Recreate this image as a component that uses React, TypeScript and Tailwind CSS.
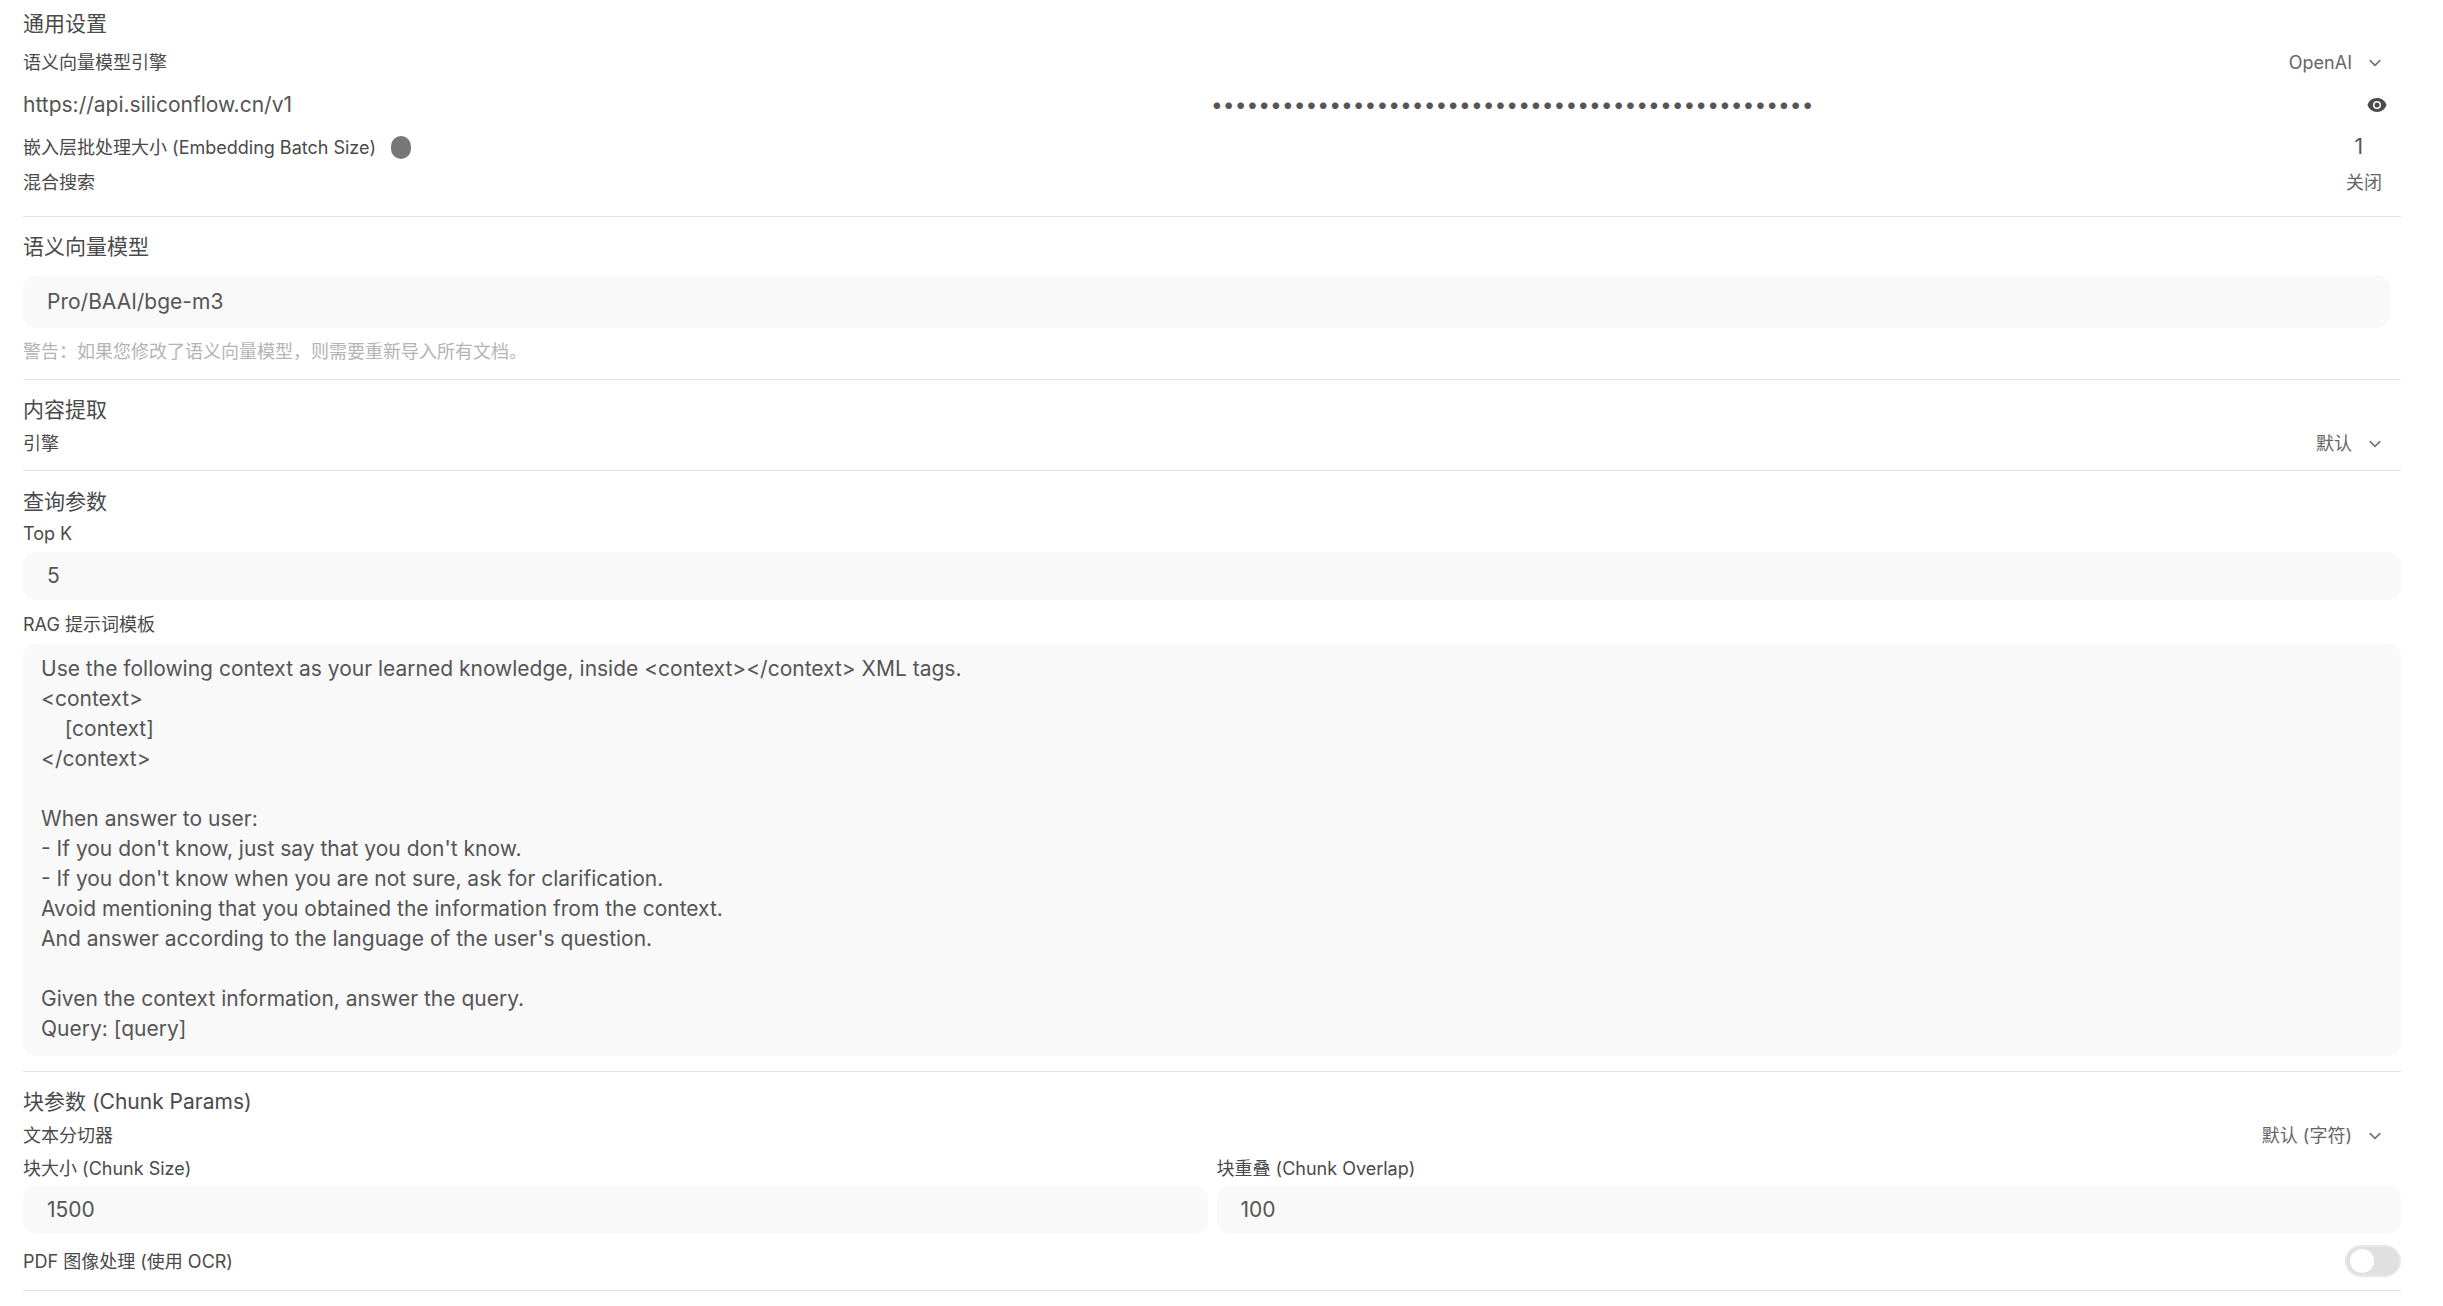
const font = { fontFamily: "Inter, 'Noto Sans CJK SC', sans-serif" };

function Chevron() {
  return (
    <svg className="w-[16px] h-[16px] text-[#6b7280] shrink-0" viewBox="0 0 20 20" fill="none" stroke="currentColor" strokeWidth="2" strokeLinecap="round" strokeLinejoin="round">
      <path d="M4 7l6 6 6-6" />
    </svg>
  );
}

function Heading({ children }: { children: React.ReactNode }) {
  return <div className="text-[21px] leading-[27px] text-[#4a4a4a]">{children}</div>;
}

function Row({ label, right, className = "" }: { label: React.ReactNode; right?: React.ReactNode; className?: string }) {
  return (
    <div className={`flex items-center justify-between text-[18px] leading-[22.5px] text-[#4a4a4a] ${className}`}>
      <div>{label}</div>
      {right}
    </div>
  );
}

function Sel({ text }: { text: string }) {
  return (
    <div className="flex items-center gap-[15px] pr-[18px] text-[#666]">
      <span>{text}</span>
      <Chevron />
    </div>
  );
}

function Field({ value, className = "" }: { value: string; className?: string }) {
  return (
    <div className={`h-[48px] flex items-center rounded-[13px] bg-[#f9f9f9] px-[24px] text-[21px] text-[#555] ${className}`}>
      {value}
    </div>
  );
}

function Divider({ className = "" }: { className?: string }) {
  return <div className={`h-px bg-[#e5e5e5] ${className}`} />;
}

const template = `Use the following context as your learned knowledge, inside <context></context> XML tags.
<context>
    [context]
</context>

When answer to user:
- If you don't know, just say that you don't know.
- If you don't know when you are not sure, ask for clarification.
Avoid mentioning that you obtained the information from the context.
And answer according to the language of the user's question.

Given the context information, answer the query.
Query: [query]`;

export default function App() {
  return (
    <div style={font} className="h-[1306px] w-[2443px] overflow-hidden bg-white pl-[23px] pr-[42px] pt-[10px]">
      <Heading>通用设置</Heading>
      <Row className="mt-[15px]" label="语义向量模型引擎" right={<Sel text="OpenAI" />} />
      <div className="mt-[17px] flex h-[27px] items-center gap-[9px] text-[21px] text-[#555]">
        <div className="flex-1">https://api.siliconflow.cn/v1</div>
        <div className="flex flex-1 items-center justify-between pl-[3px] pr-[14px]">
          <input type="password" readOnly value={"x".repeat(51)} className="w-[800px] bg-transparent text-[21px] text-[#555] outline-none" />
          <svg className="h-5 w-5 text-[#4a4a4a]" viewBox="0 0 20 20" fill="currentColor">
            <path d="M10 12.5a2.5 2.5 0 1 0 0-5 2.5 2.5 0 0 0 0 5Z" />
            <path fillRule="evenodd" clipRule="evenodd" d="M.664 10.59a1.651 1.651 0 0 1 0-1.186A10.004 10.004 0 0 1 10 3c4.257 0 7.893 2.66 9.336 6.41.147.381.146.804 0 1.186A10.004 10.004 0 0 1 10 17c-4.257 0-7.893-2.66-9.336-6.41ZM14 10a4 4 0 1 1-8 0 4 4 0 0 1 8 0Z" />
          </svg>
        </div>
      </div>
      <div className="mt-[15px] flex h-[27px] items-center justify-between text-[18px] text-[#4a4a4a]">
        <div className="flex items-center gap-[15px]">
          <span>嵌入层批处理大小 (Embedding Batch Size)</span>
          <span className="h-[23px] w-5 rounded-full bg-[#787878]" />
        </div>
        <span className="pr-[38px] text-[21px] text-[#555]">1</span>
      </div>
      <Row className="mt-[11px]" label="混合搜索" right={<span className="pr-[19px] text-[#666]">关闭</span>} />
      <Divider className="mt-[22px]" />

      <Heading><div className="mt-[16px]">语义向量模型</div></Heading>
      <Field value="Pro/BAAI/bge-m3" className="mt-[15px] !h-[53px] mr-[11px]" />
      <div className="mt-[13px] text-[18px] leading-[22.5px] text-[#b4b4b4]">{"警告\uFF1A如果您修改了语义向量模型\uFF0C则需要重新导入所有文档。"}</div>
      <Divider className="mt-[15px]" />

      <Heading><div className="mt-[16px]">内容提取</div></Heading>
      <Row className="mt-[10px]" label="引擎" right={<Sel text="默认" />} />
      <Divider className="mt-[15px]" />

      <Heading><div className="mt-[17px]">查询参数</div></Heading>
      <Row className="mt-[8px]" label="Top K" />
      <Field value="5" className="mt-[6px]" />
      <Row className="mt-[14px]" label="RAG 提示词模板" />
      <div className="mt-[7px] h-[413px] whitespace-pre-wrap rounded-[13px] bg-[#f9f9f9] px-[18px] pt-[11px] text-[21px] leading-[30px] text-[#555]">
        {template}
      </div>
      <Divider className="mt-[15px]" />

      <Heading><div className="mt-[16px]">块参数 (Chunk Params)</div></Heading>
      <Row className="mt-[10px]" label="文本分切器" right={<Sel text="默认 (字符)" />} />
      <div className="mt-[10px] flex gap-[9px]">
        <div className="flex-1">
          <Row label="块大小 (Chunk Size)" />
          <Field value="1500" className="mt-[6px]" />
        </div>
        <div className="flex-1">
          <Row label="块重叠 (Chunk Overlap)" />
          <Field value="100" className="mt-[6px]" />
        </div>
      </div>
      <div className="mt-[11px] flex h-[32px] items-center justify-between">
        <span className="text-[18px] text-[#4a4a4a]">PDF 图像处理 (使用 OCR)</span>
        <span className="flex h-[32px] w-[56px] items-center rounded-full border-[2px] border-[#e8e8e8] bg-[#e0e0e0] pl-[3px]">
          <span className="h-[24px] w-[24px] rounded-full bg-white" />
        </span>
      </div>
      <Divider className="mt-[13px]" />
    </div>
  );
}
